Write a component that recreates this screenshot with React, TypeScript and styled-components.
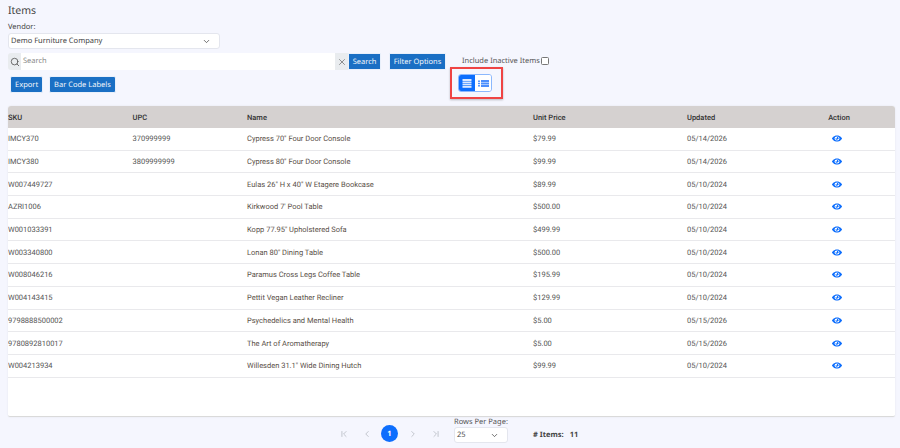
import React from "react";
import styled, { createGlobalStyle } from "styled-components";
import { ChevronDown, ChevronFirst, ChevronLast, ChevronLeft, ChevronRight, Search, X } from "lucide-react";

const Global = createGlobalStyle`
  html, body { margin: 0; padding: 0; background: #f5f6fe; }
  body { width: 900px; height: 448px; overflow: hidden; font-family: "Noto Sans", sans-serif; text-rendering: geometricPrecision; }
  * { box-sizing: border-box; }
`;

const Page = styled.div`
  width: 900px; height: 448px; padding: 3px 5px 0 8px; display: flex; flex-direction: column;
`;
const Title = styled.h1`
  margin: 0; font-size: 10.5px; line-height: 17px; font-weight: 400; color: #444;
`;
const Label = styled.div`
  font-size: 7.5px; line-height: 11px; margin-top: 2px; color: #444;
`;
const VendorSelect = styled.div`
  width: 212px; height: 16px; background: #fff; border: 1px solid #e4e6ee; border-radius: 3px;
  display: flex; align-items: center; justify-content: space-between; padding: 0 8px 0 2px;
  font-size: 7.5px; color: #444;
`;
const Toolbar = styled.div`
  display: flex; margin-top: 4px; align-items: flex-start;
`;
const LeftTools = styled.div`
  width: 373px; display: flex; flex-direction: column; gap: 6px;
`;
const SearchBox = styled.div`
  display: flex; height: 17px; width: 373px;
`;
const SearchIcon = styled.div`
  width: 13px; background: #e9ecef; display: flex; align-items: center; justify-content: center;
  border-radius: 3px 0 0 3px; color: #555;
`;
const SearchField = styled.div`
  flex: 1; background: #fff; font-size: 7.5px; line-height: 17px; color: #888; padding-left: 2px;
`;
const ClearBtn = styled.div`
  width: 13px; background: #e9ecef; display: flex; align-items: center; justify-content: center; color: #555;
`;
const Btn = styled.button`
  height: 17px; border: 1px solid #e9f0fb; background: #1a6fc4; color: #f2f6fb; font-family: "Noto Sans", sans-serif;
  font-size: 7.5px; padding: 0 4px; border-radius: ${p => p.$square ? "0" : "2px"}; white-space: nowrap; outline: none;
  text-rendering: geometricPrecision;
`;
const SearchBtn = styled(Btn)`
  width: 33px; padding: 0;
`;
const BtnRow = styled.div`
  display: flex; gap: 6px; padding-left: 2px;
`;
const FilterBtn = styled(Btn)`
  width: 57px; margin-left: 8px; padding: 0;
`;
const MiddleTools = styled.div`
  position: relative; display: flex; flex-direction: column; margin-left: 16px; margin-top: 2px;
`;
const InactiveRow = styled.label`
  display: flex; align-items: center; gap: 1px; font-size: 7.5px; color: #555; height: 12px;
`;
const Check = styled.span`
  width: 8px; height: 8px; background: #fff; border: 1px solid #777; border-radius: 1.5px; display: block;
`;
const Toggle = styled.div`
  display: flex; width: 34px; height: 18px; margin: 7px 0 0 -4px; border-radius: 3px; overflow: hidden;
  border: 1px solid #8cb8fd;
`;
const ToggleBtn = styled.div`
  flex: 1; display: flex; align-items: center; justify-content: center;
  background: ${p => p.$on ? "#0d6efd" : "#fff"};
`;
const Highlight = styled.div`
  position: absolute; left: -12px; top: 12px; width: 53px; height: 32px; border: 2px solid #ef4444;
  box-shadow: 0 1px 2px rgba(0,0,0,.25); pointer-events: none;
`;
const TableCard = styled.div`
  margin-top: 13px; height: 311px; background: #fff; border-radius: 3px 3px 2px 2px; overflow: hidden;
  border-bottom: 1px solid #dadada; box-shadow: 0 0 2px rgba(0,0,0,.08);
`;
const Row = styled.div`
  display: grid; grid-template-columns: 124.5px 114.5px 286px 154px 141px 1fr; height: ${p => p.$head ? "22px" : "22.7px"};
  align-items: center; font-family: Roboto, sans-serif; font-size: 7.5px;
  color: ${p => p.$head ? "#333" : "#555"}; font-weight: ${p => p.$head ? 500 : 400};
  background: ${p => p.$head ? "#d5d1d0" : "#fff"};
  border-bottom: ${p => p.$head ? "none" : "1px solid #e9e9ec"};
`;
const NameCell = styled.span`
  color: #5a5048; white-space: nowrap;
`;
const ActionCell = styled.span`
  width: 22px; display: flex; justify-content: center; text-align: center; white-space: nowrap;
`;
const EyeWrap = styled.span`
  display: flex; margin-left: -4px;
`;
const Footer = styled.div`
  display: flex; align-items: flex-start; padding-left: 324px; font-size: 7.5px; color: #555;
`;
const Pager = styled.div`
  display: flex; align-items: center; margin-top: 8px; color: #a4a9b0;
`;
const PageSlot = styled.span`
  width: 23px; height: 17px; display: flex; align-items: center; justify-content: center;
`;
const PageNum = styled.span`
  width: 17px; height: 17px; border-radius: 50%; background: #0d6efd; color: #fff; margin: 0 3px;
  display: flex; align-items: center; justify-content: center; font-size: 7.5px; font-weight: 700; font-family: "Noto Sans", sans-serif;
`;
const RowsBox = styled.div`
  margin-left: 7px; display: flex; flex-direction: column;
`;
const RowsLabel = styled.div`
  font-size: 7.5px; line-height: 10px; color: #555;
`;
const RowsSelect = styled.div`
  width: 54px; height: 16px; background: #fff; border: 1px solid #e4e6ee; border-radius: 3px;
  display: flex; align-items: center; justify-content: space-between; padding: 0 8px 0 2px; color: #444;
`;
const Count = styled.div`
  margin-left: 25px; margin-top: 12px; font-weight: 700; font-size: 7.5px; color: #444; display: flex; gap: 6px; line-height: 12px;
`;

const Eye = () => (
  <svg width="10" height="7" viewBox="0 0 576 512" preserveAspectRatio="none" fill="#0d6efd">
    <path d="M288 32C207 32 142 69 95 113 48 156 17 208 2 244c-3 8-3 17 0 25 15 36 46 88 93 131 47 44 112 80 193 80s146-36 193-80c47-44 78-95 93-131 3-8 3-17 0-25-15-36-46-88-93-131C434 69 369 32 288 32zM144 256a144 144 0 1 1 288 0 144 144 0 1 1-288 0zm144-64a64 64 0 0 1-84 61c-6-2-12 1-12 7 0 3 0 7 1 10 14 51 67 82 118 68s82-67 68-118c-11-42-48-70-89-72-6 0-9 6-7 12 3 8 5 15 5 24z" />
  </svg>
);

const GridIcon = () => (
  <svg width="10" height="9" viewBox="0 0 10 9" fill="#dbe8ff">
    <rect x="0.5" y="0" width="9" height="2" /><rect x="0.5" y="2.5" width="9" height="1.6" />
    <rect x="0.5" y="4.6" width="9" height="1.6" /><rect x="0.5" y="6.8" width="9" height="2" />
  </svg>
);
const ListIcon = () => (
  <svg width="11" height="7" viewBox="0 0 11 7" fill="#4d8ffd">
    <rect x="0" y="0.5" width="2" height="1.4" /><rect x="3" y="0" width="8" height="2" />
    <rect x="0" y="2.8" width="2" height="1.4" /><rect x="3" y="2.5" width="8" height="2" />
    <rect x="0" y="5.1" width="2" height="1.4" /><rect x="3" y="5" width="8" height="2" />
  </svg>
);

const rows = [
  ["IMCY370", "370999999", "Cypress 70\" Four Door Console", "$79.99", "05/14/2026"],
  ["IMCY380", "3809999999", "Cypress 80\" Four Door Console", "$99.99", "05/14/2026"],
  ["W007449727", "", "Eulas 26\" H x 40\" W Etagere Bookcase", "$89.99", "05/10/2024"],
  ["AZRI1006", "", "Kirkwood 7' Pool Table", "$500.00", "05/10/2024"],
  ["W001033391", "", "Kopp 77.95'' Upholstered Sofa", "$499.99", "05/10/2024"],
  ["W003340800", "", "Lonan 80'' Dining Table", "$500.00", "05/10/2024"],
  ["W008046216", "", "Paramus Cross Legs Coffee Table", "$195.99", "05/10/2024"],
  ["W004143415", "", "Pettit Vegan Leather Recliner", "$129.99", "05/10/2024"],
  ["9798888500002", "", "Psychedelics and Mental Health", "$5.00", "05/15/2026"],
  ["9780892810017", "", "The Art of Aromatherapy", "$5.00", "05/15/2026"],
  ["W004213934", "", "Willesden 31.1'' Wide Dining Hutch", "$99.99", "05/10/2024"],
];

export default function App() {
  return (
    <Page>
      <Global />
      <Title>Items</Title>
      <Label>Vendor:</Label>
      <VendorSelect>
        Demo Furniture Company
        <ChevronDown size={9} strokeWidth={2} />
      </VendorSelect>
      <Toolbar>
        <LeftTools>
          <SearchBox>
            <SearchIcon><Search size={10} strokeWidth={2} /></SearchIcon>
            <SearchField>Search</SearchField>
            <ClearBtn><X size={10} strokeWidth={1.5} /></ClearBtn>
            <SearchBtn $square>Search</SearchBtn>
          </SearchBox>
          <BtnRow>
            <Btn>Export</Btn>
            <Btn>Bar Code Labels</Btn>
          </BtnRow>
        </LeftTools>
        <FilterBtn $square>Filter Options</FilterBtn>
        <MiddleTools>
          <InactiveRow>Include Inactive Items<Check /></InactiveRow>
          <Toggle>
            <ToggleBtn $on><GridIcon /></ToggleBtn>
            <ToggleBtn><ListIcon /></ToggleBtn>
          </Toggle>
          <Highlight />
        </MiddleTools>
      </Toolbar>
      <TableCard>
        <Row $head>
          <span>SKU</span><span>UPC</span><span>Name</span><span>Unit Price</span><span>Updated</span>
          <ActionCell>Action</ActionCell>
        </Row>
        {rows.map(r => (
          <Row key={r[0]}>
            <span>{r[0]}</span><span>{r[1]}</span><NameCell>{r[2]}</NameCell><span>{r[3]}</span><span>{r[4]}</span>
            <ActionCell><EyeWrap><Eye /></EyeWrap></ActionCell>
          </Row>
        ))}
      </TableCard>
      <Footer>
        <Pager>
          <PageSlot><ChevronFirst size={10} strokeWidth={1.5} /></PageSlot>
          <PageSlot><ChevronLeft size={10} strokeWidth={1.5} /></PageSlot>
          <PageNum>1</PageNum>
          <PageSlot><ChevronRight size={10} strokeWidth={1.5} /></PageSlot>
          <PageSlot><ChevronLast size={10} strokeWidth={1.5} /></PageSlot>
        </Pager>
        <RowsBox>
          <RowsLabel>Rows Per Page:</RowsLabel>
          <RowsSelect>25<ChevronDown size={9} strokeWidth={2} /></RowsSelect>
        </RowsBox>
        <Count><span># Items:</span><span>11</span></Count>
      </Footer>
    </Page>
  );
}
